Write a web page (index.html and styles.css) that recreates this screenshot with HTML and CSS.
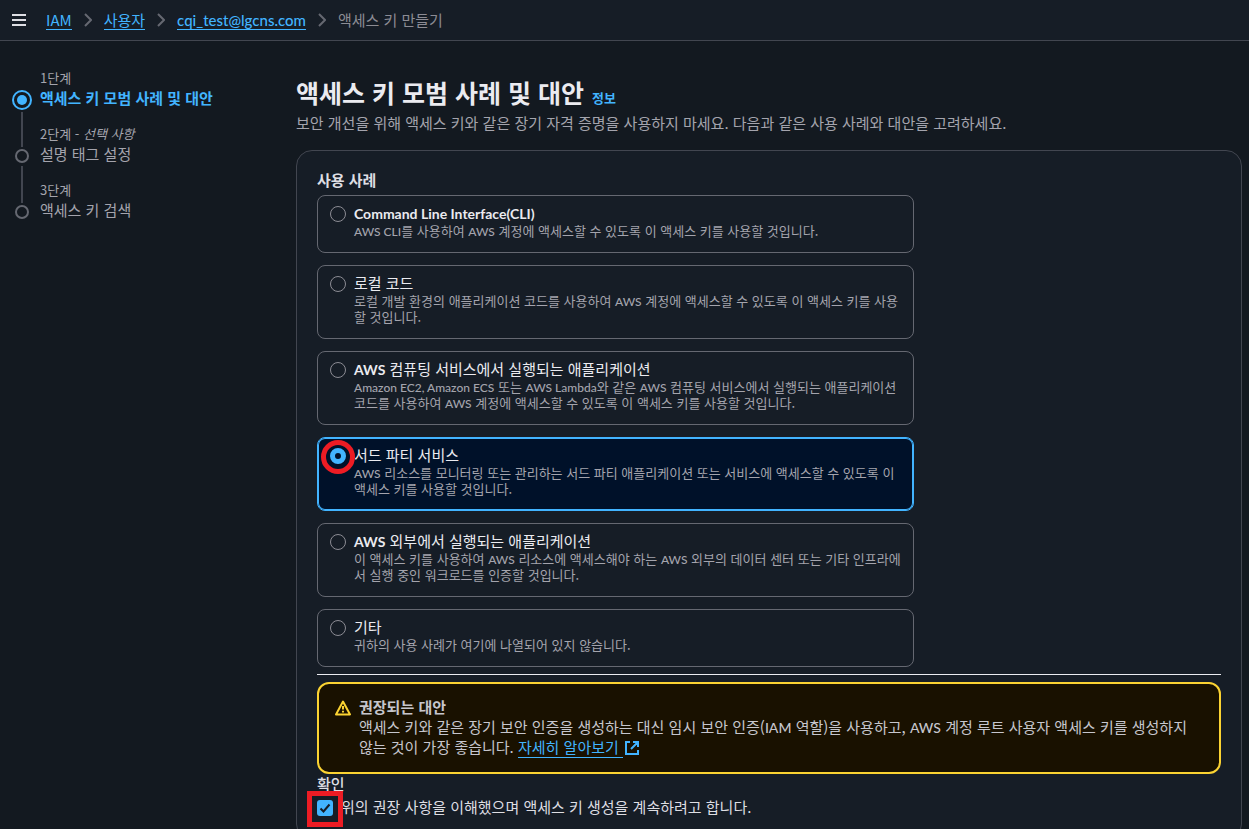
FILE: index.html
```html
<!DOCTYPE html>
<html lang="ko">
<head>
    <meta charset="UTF-8">
    <meta name="viewport" content="width=device-width, initial-scale=1.0">
    <title>액세스 키 만들기 | IAM</title>
    <link rel="stylesheet" href="styles.css">
</head>
<body>

<!-- Breadcrumb bar -->
<header class="topbar">
    <button class="menu-button" type="button" aria-label="메뉴">
        <svg width="14" height="12" viewBox="0 0 14 12"><path d="M0 1h14M0 6h14M0 11h14" stroke="currentColor" stroke-width="2"/></svg>
    </button>
    <nav class="breadcrumbs">
        <a href="#iam">IAM</a>
        <svg class="chevron" width="8" height="14" viewBox="0 0 8 14"><path d="M1 1l6 6-6 6"/></svg>
        <a href="#users">사용자</a>
        <svg class="chevron" width="8" height="14" viewBox="0 0 8 14"><path d="M1 1l6 6-6 6"/></svg>
        <a href="#user" class="latin">cqi_test@lgcns.com</a>
        <svg class="chevron" width="8" height="14" viewBox="0 0 8 14"><path d="M1 1l6 6-6 6"/></svg>
        <span>액세스 키 만들기</span>
    </nav>
</header>

<div class="layout">
    <!-- Wizard steps -->
    <ol class="steps">
        <li class="step active">
            <span class="step-label">1단계</span>
            <svg class="step-icon" width="20" height="20" viewBox="0 0 20 20"><circle cx="10" cy="10" r="9" fill="none" stroke="currentColor" stroke-width="2"/><circle cx="10" cy="10" r="5" fill="currentColor"/></svg>
            <span class="step-title">액세스 키 모범 사례 및 대안</span>
        </li>
        <li class="step">
            <span class="step-label">2단계 - <i>선택 사항</i></span>
            <svg class="step-icon" width="20" height="20" viewBox="0 0 20 20"><circle cx="10" cy="10" r="6" fill="none" stroke="currentColor" stroke-width="2"/></svg>
            <span class="step-title">설명 태그 설정</span>
        </li>
        <li class="step">
            <span class="step-label">3단계</span>
            <svg class="step-icon" width="20" height="20" viewBox="0 0 20 20"><circle cx="10" cy="10" r="6" fill="none" stroke="currentColor" stroke-width="2"/></svg>
            <span class="step-title">액세스 키 검색</span>
        </li>
    </ol>

    <main class="content">
        <div class="page-title">
            <h1>액세스 키 모범 사례 및 대안</h1>
            <a href="#info">정보</a>
        </div>
        <p class="page-desc">보안 개선을 위해 액세스 키와 같은 장기 자격 증명을 사용하지 마세요. 다음과 같은 사용 사례와 대안을 고려하세요.</p>

        <div class="card">
            <!-- Use cases -->
            <fieldset class="tiles">
                <legend>사용 사례</legend>
                <label class="tile">
                    <input type="radio" name="usecase">
                    <span class="tile-text">
                        <span class="tile-title"><span class="latin">Command Line Interface(CLI)</span></span>
                        <span class="tile-desc"><span class="latin">AWS CLI</span>를 사용하여 <span class="latin">AWS</span> 계정에 액세스할 수 있도록 이 액세스 키를 사용할 것입니다.</span>
                    </span>
                </label>
                <label class="tile">
                    <input type="radio" name="usecase">
                    <span class="tile-text">
                        <span class="tile-title">로컬 코드</span>
                        <span class="tile-desc">로컬 개발 환경의 애플리케이션 코드를 사용하여 <span class="latin">AWS</span> 계정에 액세스할 수 있도록 이 액세스 키를 사용할 것입니다.</span>
                    </span>
                </label>
                <label class="tile">
                    <input type="radio" name="usecase">
                    <span class="tile-text">
                        <span class="tile-title"><span class="latin">AWS</span> 컴퓨팅 서비스에서 실행되는 애플리케이션</span>
                        <span class="tile-desc"><span class="latin">Amazon EC2, Amazon ECS</span> 또는 <span class="latin">AWS Lambda</span>와 같은 <span class="latin">AWS</span> 컴퓨팅 서비스에서 실행되는 애플리케이션 코드를 사용하여 <span class="latin">AWS</span> 계정에 액세스할 수 있도록 이 액세스 키를 사용할 것입니다.</span>
                    </span>
                </label>
                <label class="tile selected">
                    <input type="radio" name="usecase" checked>
                    <span class="tile-text">
                        <span class="tile-title">서드 파티 서비스</span>
                        <span class="tile-desc"><span class="latin">AWS</span> 리소스를 모니터링 또는 관리하는 서드 파티 애플리케이션 또는 서비스에 액세스할 수 있도록 이 액세스 키를 사용할 것입니다.</span>
                    </span>
                    <span class="mark-ring"></span>
                </label>
                <label class="tile">
                    <input type="radio" name="usecase">
                    <span class="tile-text">
                        <span class="tile-title"><span class="latin">AWS</span> 외부에서 실행되는 애플리케이션</span>
                        <span class="tile-desc">이 액세스 키를 사용하여 <span class="latin">AWS</span> 리소스에 액세스해야 하는 <span class="latin">AWS</span> 외부의 데이터 센터 또는 기타 인프라에서 실행 중인 워크로드를 인증할 것입니다.</span>
                    </span>
                </label>
                <label class="tile">
                    <input type="radio" name="usecase">
                    <span class="tile-text">
                        <span class="tile-title">기타</span>
                        <span class="tile-desc">귀하의 사용 사례가 여기에 나열되어 있지 않습니다.</span>
                    </span>
                </label>
            </fieldset>

            <hr>

            <!-- Recommended alternative -->
            <div class="alert">
                <svg class="alert-icon" width="16" height="16" viewBox="0 0 16 16"><path d="M8 1.6L15 14.4H1z" fill="none" stroke="currentColor" stroke-width="2" stroke-linejoin="round"/><path d="M8 6v3.5M8 10.8v1.8" stroke="currentColor" stroke-width="2"/></svg>
                <div>
                    <strong>권장되는 대안</strong>
                    <p>액세스 키와 같은 장기 보안 인증을 생성하는 대신 임시 보안 인증(<span class="latin">IAM</span> 역할)을 사용하고, <span class="latin">AWS</span> 계정 루트 사용자 액세스 키를 생성하지 않는 것이 가장 좋습니다. <a href="#more">자세히 알아보기&nbsp;</a><svg class="external" width="14" height="14" viewBox="0 0 14 14"><path d="M5 1H1v12h12V9M8 1h5v5M13 1L6 8" fill="none" stroke="currentColor" stroke-width="2"/></svg></p>
                </div>
            </div>

            <!-- Confirmation -->
            <div class="confirm">
                <div class="confirm-title">확인</div>
                <label class="confirm-row">
                    <input type="checkbox" checked>
                    <span>위의 권장 사항을 이해했으며 액세스 키 생성을 계속하려고 합니다.</span>
                    <span class="mark-box"></span>
                </label>
            </div>
        </div>
    </main>
</div>

</body>
</html>
```
FILE: styles.css
```css
* {
    box-sizing: border-box;
}
body {
    margin: 0;
    background: #131920;
    color: #dedee3;
    font-family: "Noto Sans CJK KR", sans-serif;
    font-size: 15px;
    line-height: 20px;
}
a {
    color: #42b4ff;
    text-decoration: none;
}
svg {
    display: block;
    flex: none;
}
.latin {
    font-family: Lato, sans-serif;
    font-size: 14px;
    font-weight: 500;
    line-height: 1;
}

/* Breadcrumb bar */
.topbar {
    display: flex;
    align-items: center;
    gap: 20px;
    height: 41px;
    padding: 0 12px;
    background: #161d26;
    border-bottom: 1px solid #424650;
}
.menu-button {
    padding: 0;
    border: none;
    background: none;
    color: #dedee3;
    cursor: pointer;
}
.breadcrumbs {
    display: flex;
    align-items: center;
    gap: 12px;
    color: #8c8c94;
}
.breadcrumbs a {
    line-height: 18px;
    border-bottom: 1px solid #42b4ff;
}
.breadcrumbs .latin {
    font-size: 15px;
}
.chevron {
    fill: none;
    stroke: #656871;
    stroke-width: 2;
}

.layout {
    display: grid;
    grid-template-columns: 284px 1fr;
    padding: 29px 7px 0 12px;
}

/* Wizard steps */
.steps {
    margin: 0;
    padding: 0;
    list-style: none;
    color: #a4a4ad;
}
.step {
    display: grid;
    grid-template-columns: 20px 1fr;
    grid-template-rows: 18px 22px 16px;
    column-gap: 8px;
}
.step-label {
    grid-area: 1 / 2;
    font-size: 13px;
    line-height: 16px;
}
.step-icon {
    grid-area: 2 / 1;
    align-self: end;
    color: #656871;
}
.step-title {
    grid-area: 2 / 2;
}
.step::before,
.step::after {
    content: "";
    justify-self: center;
    width: 2px;
    background: #424650;
}
.step::before {
    grid-area: 1 / 1;
    margin-bottom: -3px;
}
.step::after {
    grid-area: 3 / 1;
}
.step:first-child::before,
.step:last-child::after {
    display: none;
}
.step.active::after {
    margin-top: 2px;
}
.active .step-icon,
.active .step-title {
    color: #42b4ff;
    font-weight: bold;
}

/* Page heading */
.page-title {
    display: flex;
    align-items: baseline;
    gap: 8px;
    padding-top: 6px;
}
.page-title h1 {
    margin: 0;
    font-size: 25px;
    line-height: 32px;
    color: #ebebf0;
}
.page-title a {
    font-size: 13px;
    font-weight: bold;
}
.page-desc {
    margin: 5px 0 17px;
    color: #a4a4ad;
}

.card {
    padding: 19px 20px 20px;
    background: #161d26;
    border: 1px solid #424650;
    border-radius: 16px;
}

/* Use case tiles */
.tiles {
    display: flex;
    flex-direction: column;
    gap: 12px;
    width: 66%;
    margin: 0;
    padding: 0;
    border: none;
}
.tiles legend {
    padding: 0 0 5px;
    font-weight: bold;
}
.tile {
    position: relative;
    display: flex;
    gap: 8px;
    padding: 7px 8px 13px 12px;
    border: 1px solid #656871;
    border-radius: 8px;
    cursor: pointer;
}
.tile.selected {
    background: #001129;
    border-color: #42b4ff;
    box-shadow: inset 0 0 0 1px #42b4ff;
}
.tile input {
    flex: none;
    appearance: none;
    width: 16px;
    height: 16px;
    margin: 3px 0;
    border: 1px solid #8c8c94;
    border-radius: 50%;
}
.tile input:checked {
    border: 5px solid #42b4ff;
}
.tile-title,
.tile-desc {
    display: block;
}
.tile-title {
    color: #ebebf0;
}
.tile-title .latin {
    font-weight: bold;
}
.tile-desc {
    font-size: 13px;
    line-height: 16px;
    color: #a4a4ad;
}
.tile-desc .latin {
    font-size: 12px;
}

hr {
    margin: 7px 0;
    border: none;
    border-top: 1px solid #ebebf0;
}

/* Alert */
.alert {
    display: flex;
    gap: 8px;
    padding: 13px 32px 15px 16px;
    background: #191100;
    border: 2px solid #fbd332;
    border-radius: 12px;
    color: #c6c6cd;
}
.alert-icon {
    margin-top: 3px;
    color: #fbd332;
}
.alert strong {
    display: block;
}
.alert p {
    margin: 0;
}
.alert a {
    border-bottom: 1px solid #42b4ff;
}
.external {
    display: inline-block;
    margin-left: 2px;
    vertical-align: -2px;
    color: #42b4ff;
}

/* Confirmation */
.confirm-title {
    font-weight: 500;
}
.confirm-row {
    position: relative;
    display: flex;
    gap: 8px;
    margin-top: 3px;
}
.confirm-row input {
    appearance: none;
    width: 16px;
    height: 16px;
    margin: 3px 0;
    border-radius: 3px;
}
.confirm-row input:checked {
    background: #42b4ff url("data:image/svg+xml,%3Csvg xmlns='http://www.w3.org/2000/svg' viewBox='0 0 16 16'%3E%3Cpath d='M3.5 8.5l3 3 6-7' fill='none' stroke='%23161d26' stroke-width='2'/%3E%3C/svg%3E");
}

/* Red marks over the two selected controls */
.mark-ring,
.mark-box {
    position: absolute;
    border: 5px solid #ed1c24;
    pointer-events: none;
}
.mark-ring {
    top: 2px;
    left: 3px;
    width: 34px;
    height: 34px;
    border-radius: 50%;
}
.mark-box {
    top: -6px;
    left: -10px;
    width: 36px;
    height: 36px;
}
```
